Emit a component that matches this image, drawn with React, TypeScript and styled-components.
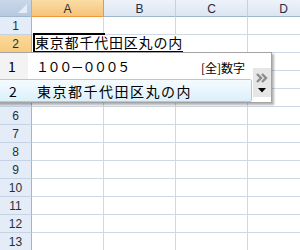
import styled, { createGlobalStyle, css } from "styled-components";

const GlobalStyle = createGlobalStyle`
  html, body {
    margin: 0;
    padding: 0;
    background: #fff;
    overflow: hidden;
  }
`;

const COLS = ["A", "B", "C", "D"];
const ROW_COUNT = 13;

const Sheet = styled.div`
  position: relative;
  width: 300px;
  height: 250px;
  overflow: hidden;
  display: grid;
  grid-template-columns: 32px repeat(4, 72px);
  grid-template-rows: 17px repeat(${ROW_COUNT}, 18px);
  font-family: "Liberation Sans", "Noto Sans CJK JP", sans-serif;
  color: #1f2f3f;
`;

const Corner = styled.div`
  position: relative;
  box-sizing: border-box;
  background: linear-gradient(#c9d7ea, #b7c9e2);
  border-right: 1px solid #9eb6ce;
  border-bottom: 1px solid #9eb6ce;

  &::after {
    content: "";
    position: absolute;
    right: 4px;
    bottom: 3px;
    border-style: solid;
    border-width: 0 0 9px 9px;
    border-color: transparent transparent #e6edf5 transparent;
  }
`;

const ColHeader = styled.div<{ $selected?: boolean }>`
  box-sizing: border-box;
  display: flex;
  align-items: center;
  justify-content: center;
  font-size: 12px;
  padding-top: 1px;
  background: linear-gradient(#eef3fa, #dce5f1);
  border-right: 1px solid #c3d1e1;
  border-bottom: 1px solid #9eb6ce;

  ${(p) =>
    p.$selected &&
    css`
      background: linear-gradient(#fbdda6, #f5c479);
      border-right-color: #f29536;
      border-bottom-color: #f29536;
    `}
`;

const RowHeader = styled.div<{ $selected?: boolean }>`
  box-sizing: border-box;
  display: flex;
  align-items: center;
  justify-content: center;
  font-size: 12px;
  background: #e4ecf7;
  border-right: 1px solid #9eb6ce;
  border-bottom: 1px solid #c5d3e4;

  ${(p) =>
    p.$selected &&
    css`
      background: linear-gradient(#fbd99b, #f8cb7e);
      border-right-color: #f29536;
      border-bottom-color: #f29536;
    `}
`;

const Cell = styled.div`
  box-sizing: border-box;
  border-right: 1px solid #d0d7e5;
  border-bottom: 1px solid #d0d7e5;
  background: #fff;
`;

const ActiveFrame = styled.div`
  position: absolute;
  left: 33px;
  top: 33px;
  width: 72px;
  height: 20px;
  box-sizing: border-box;
  border: 2px solid #000;
  z-index: 1;
`;

const Composition = styled.div`
  position: absolute;
  left: 35px;
  top: 35px;
  height: 16px;
  background: #fff;
  font-family: "Noto Sans CJK JP", sans-serif;
  font-size: 14px;
  line-height: 15px;
  letter-spacing: 0.8px;
  color: #000;
  white-space: nowrap;
  border-bottom: 2px solid #000;
  z-index: 2;
`;

const Candidates = styled.div`
  position: absolute;
  left: -4px;
  top: 52px;
  width: 276px;
  height: 51px;
  box-sizing: border-box;
  background: #fff;
  border: 1px solid #a3a3a3;
  box-shadow: 2px 2px 2px rgba(0, 0, 0, 0.3);
  display: flex;
  z-index: 3;
  font-family: "Noto Sans CJK JP", sans-serif;
  color: #000;
`;

const List = styled.div`
  flex: 1;
  display: flex;
  flex-direction: column;
`;

const Candidate = styled.div<{ $active?: boolean; $h: number }>`
  height: ${(p) => p.$h}px;
  box-sizing: border-box;
  display: flex;
  align-items: center;
  margin-right: 1px;

  ${(p) =>
    p.$active &&
    css`
      border: 1px solid #97d3f0;
      border-radius: 2px;
      background: linear-gradient(#f5fbfe, #dcf0fb);
    `}
`;

const Num = styled.div<{ $active?: boolean }>`
  align-self: stretch;
  width: 31px;
  box-sizing: border-box;
  padding-left: 11px;
  display: flex;
  align-items: center;
  font-size: 14px;
  background: ${(p) => (p.$active ? "transparent" : "#f3f3f3")};
`;

const Word = styled.div<{ $size: number; $spacing: number }>`
  flex: 1;
  padding-left: 8px;
  font-size: ${(p) => p.$size}px;
  letter-spacing: ${(p) => p.$spacing}px;
  white-space: nowrap;
`;

const Tag = styled.div`
  font-size: 12px;
  padding-right: 7px;
  padding-top: 3px;
`;

const Side = styled.div`
  width: 18px;
  padding-top: 15px;
`;

const SideButtons = styled.div`
  height: 29px;
  background: #e6e6e6;
  display: flex;
  flex-direction: column;
  align-items: center;
  justify-content: space-between;
  padding: 5px 0 4px;
  box-sizing: border-box;
`;

const App = () => {
  return (
    <>
      <GlobalStyle />
      <Sheet>
        <Corner />
        {COLS.map((c, i) => (
          <ColHeader key={c} $selected={i === 0}>
            {c}
          </ColHeader>
        ))}
        {Array.from({ length: ROW_COUNT }, (_, r) => (
          <Row key={r} n={r + 1} />
        ))}

        <ActiveFrame />
        <Composition>東京都千代田区丸の内</Composition>

        <Candidates>
          <List>
            <Candidate $h={26}>
              <Num>1</Num>
              <Word $size={13} $spacing={-1.4}>
                １００－０００５
              </Word>
              <Tag>[全]数字</Tag>
            </Candidate>
            <Candidate $h={23} $active>
              <Num $active>2</Num>
              <Word $size={14} $spacing={1.5}>
                東京都千代田区丸の内
              </Word>
            </Candidate>
          </List>
          <Side>
            <SideButtons>
              <svg width="12" height="10" viewBox="0 0 12 10">
                <path
                  d="M1 1 L5 5 L1 9 M6 1 L10 5 L6 9"
                  fill="none"
                  stroke="#8c8c8c"
                  strokeWidth="2.4"
                />
              </svg>
              <svg width="8" height="5" viewBox="0 0 8 5">
                <polygon points="0,0 8,0 4,4.5" fill="#000" />
              </svg>
            </SideButtons>
          </Side>
        </Candidates>
      </Sheet>
    </>
  );
};

const Row = ({ n }: { n: number }) => (
  <>
    <RowHeader $selected={n === 2}>{n}</RowHeader>
    {COLS.map((c) => (
      <Cell key={c} />
    ))}
  </>
);

export default App;
